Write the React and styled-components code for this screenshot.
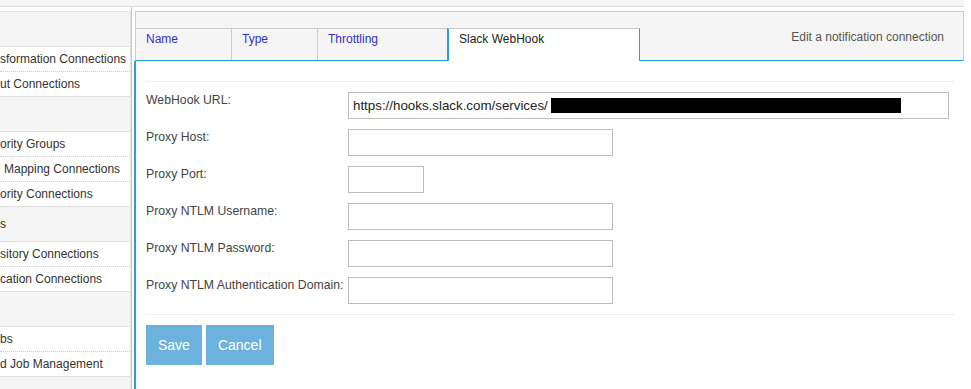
import styled, { createGlobalStyle } from "styled-components";

const GlobalStyle = createGlobalStyle`
  html, body {
    margin: 0;
    padding: 0;
    background: #ffffff;
  }
  body {
    font-family: "Liberation Sans", Arial, sans-serif;
    font-size: 12px;
    color: #444;
  }
`;

const Page = styled.div`
  width: 971px;
  height: 389px;
  overflow: hidden;
`;

const TopStrip = styled.div`
  width: 964px;
  height: 6px;
  background: #f6f6f6;
  border-bottom: 1px solid #dcdcdc;
`;

const Body = styled.div`
  display: flex;
  align-items: stretch;
  height: 382px;
`;

const SideColumn = styled.div`
  width: 131px;
  padding-top: 4px;
`;

const Nav = styled.ul`
  list-style: none;
  margin: 0;
  padding: 0;
  border-right: 1px solid #e3e3e3;
  border-top: 1px solid #e3e3e3;
  height: 100%;
  background: #f5f5f5;
  overflow: hidden;
`;

const NavHeader = styled.li`
  height: 34px;
  line-height: 34px;
  background: #f5f5f5;
  color: #333;
  white-space: nowrap;
`;

const NavGroup = styled.li`
  background: #fff;
  border-top: 1px solid #e0e0e0;
  border-bottom: 1px solid #e0e0e0;
`;

const NavItem = styled.div`
  height: 24px;
  line-height: 24px;
  color: #333;
  white-space: nowrap;
  padding-left: ${(p) => p.$indent || 0}px;
  & + & {
    border-top: 1px dotted #cfcfcf;
  }
`;

const Splitter = styled.div`
  width: 2px;
  border-left: 1px solid #c6c6c6;
`;

const Main = styled.div`
  width: 830px;
  padding-top: 4px;
  display: flex;
  flex-direction: column;
`;

const Header = styled.div`
  margin-left: 1px;
  background: #f5f5f5;
  border-top: 1px solid #cccccc;
  border-left: 1px solid #cccccc;
  border-right: 1px solid #cccccc;
  border-bottom: 1px solid #25a0da;
  padding-top: 16px;
  display: flex;
  align-items: flex-start;
`;

const Tabs = styled.div`
  display: flex;
  flex: 1;
`;

const Tab = styled.div`
  width: ${(p) => p.$w}px;
  box-sizing: border-box;
  height: 32px;
  padding: 3px 10px 0;
  border-top: 1px solid #cccccc;
  border-right: 1px solid #cccccc;
  color: #2f2fd2;
  white-space: nowrap;
  ${(p) =>
    p.$active &&
    `
    margin-left: -1px;
    height: 33px;
    margin-bottom: -1px;
    background: #ffffff;
    border-left: 2px solid #25a0da;
    border-right: 1px solid #25a0da;
    color: #222;
    position: relative;
  `}
`;

const Caption = styled.div`
  margin: 2px 19px 0 0;
  color: #555;
  white-space: nowrap;
`;

const Content = styled.div`
  flex: 1;
  border-left: 2px solid #25a0da;
  padding: 20px 11px 0 10px;
  background: #fff;
`;

const Rule = styled.div`
  border-top: 1px dotted #dcdcdc;
`;

const Form = styled.div`
  display: flex;
  flex-direction: column;
  gap: 10px;
  margin: 10px 0;
`;

const Row = styled.div`
  display: flex;
  align-items: flex-start;
`;

const Label = styled.div`
  width: 202px;
  padding-top: 1px;
  font-size: 12.25px;
  color: #444;
  white-space: nowrap;
`;

const Field = styled.div`
  width: ${(p) => p.$w}px;
  height: 27px;
  box-sizing: border-box;
  border: 1px solid #bdbdbd;
  background: #fff;
  display: flex;
  align-items: center;
  padding-left: 4px;
  font-size: 13.33px;
  color: #222;
  white-space: nowrap;
  overflow: hidden;
`;

const Redacted = styled.span`
  display: inline-block;
  width: 350px;
  height: 15px;
  background: #000;
  margin-left: 3px;
`;

const Buttons = styled.div`
  display: flex;
  gap: 4px;
  margin-top: 10px;
`;

const Button = styled.button`
  height: 40px;
  padding: 0 12px;
  border: none;
  background: #6cb2df;
  color: #fff;
  font-family: "Liberation Sans", Arial, sans-serif;
  font-size: 14px;
  cursor: pointer;
`;

const fields = [
  { label: "WebHook URL:", w: 601, url: true },
  { label: "Proxy Host:", w: 265 },
  { label: "Proxy Port:", w: 76 },
  { label: "Proxy NTLM Username:", w: 265 },
  { label: "Proxy NTLM Password:", w: 265 },
  { label: "Proxy NTLM Authentication Domain:", w: 265 },
];

export default function App() {
  return (
    <Page>
      <GlobalStyle />
      <TopStrip />
      <Body>
        <SideColumn>
          <Nav>
            <NavHeader />
            <NavGroup>
              <NavItem>sformation Connections</NavItem>
              <NavItem>ut Connections</NavItem>
            </NavGroup>
            <NavHeader />
            <NavGroup>
              <NavItem>ority Groups</NavItem>
              <NavItem $indent={4}>Mapping Connections</NavItem>
              <NavItem>ority Connections</NavItem>
            </NavGroup>
            <NavHeader>s</NavHeader>
            <NavGroup>
              <NavItem>sitory Connections</NavItem>
              <NavItem>cation Connections</NavItem>
            </NavGroup>
            <NavHeader />
            <NavGroup>
              <NavItem>bs</NavItem>
              <NavItem>d Job Management</NavItem>
            </NavGroup>
            <NavHeader />
          </Nav>
        </SideColumn>
        <Splitter />
        <Main>
          <Header>
            <Tabs>
              <Tab $w={96}>Name</Tab>
              <Tab $w={86}>Type</Tab>
              <Tab $w={130}>Throttling</Tab>
              <Tab $w={193} $active>Slack WebHook</Tab>
            </Tabs>
            <Caption>Edit a notification connection</Caption>
          </Header>
          <Content>
            <Rule />
            <Form>
              {fields.map((f) => (
                <Row key={f.label}>
                  <Label>{f.label}</Label>
                  <Field $w={f.w}>
                    {f.url && (
                      <>
                        https://hooks.slack.com/services/
                        <Redacted />
                      </>
                    )}
                  </Field>
                </Row>
              ))}
            </Form>
            <Rule />
            <Buttons>
              <Button>Save</Button>
              <Button>Cancel</Button>
            </Buttons>
          </Content>
        </Main>
      </Body>
    </Page>
  );
}
